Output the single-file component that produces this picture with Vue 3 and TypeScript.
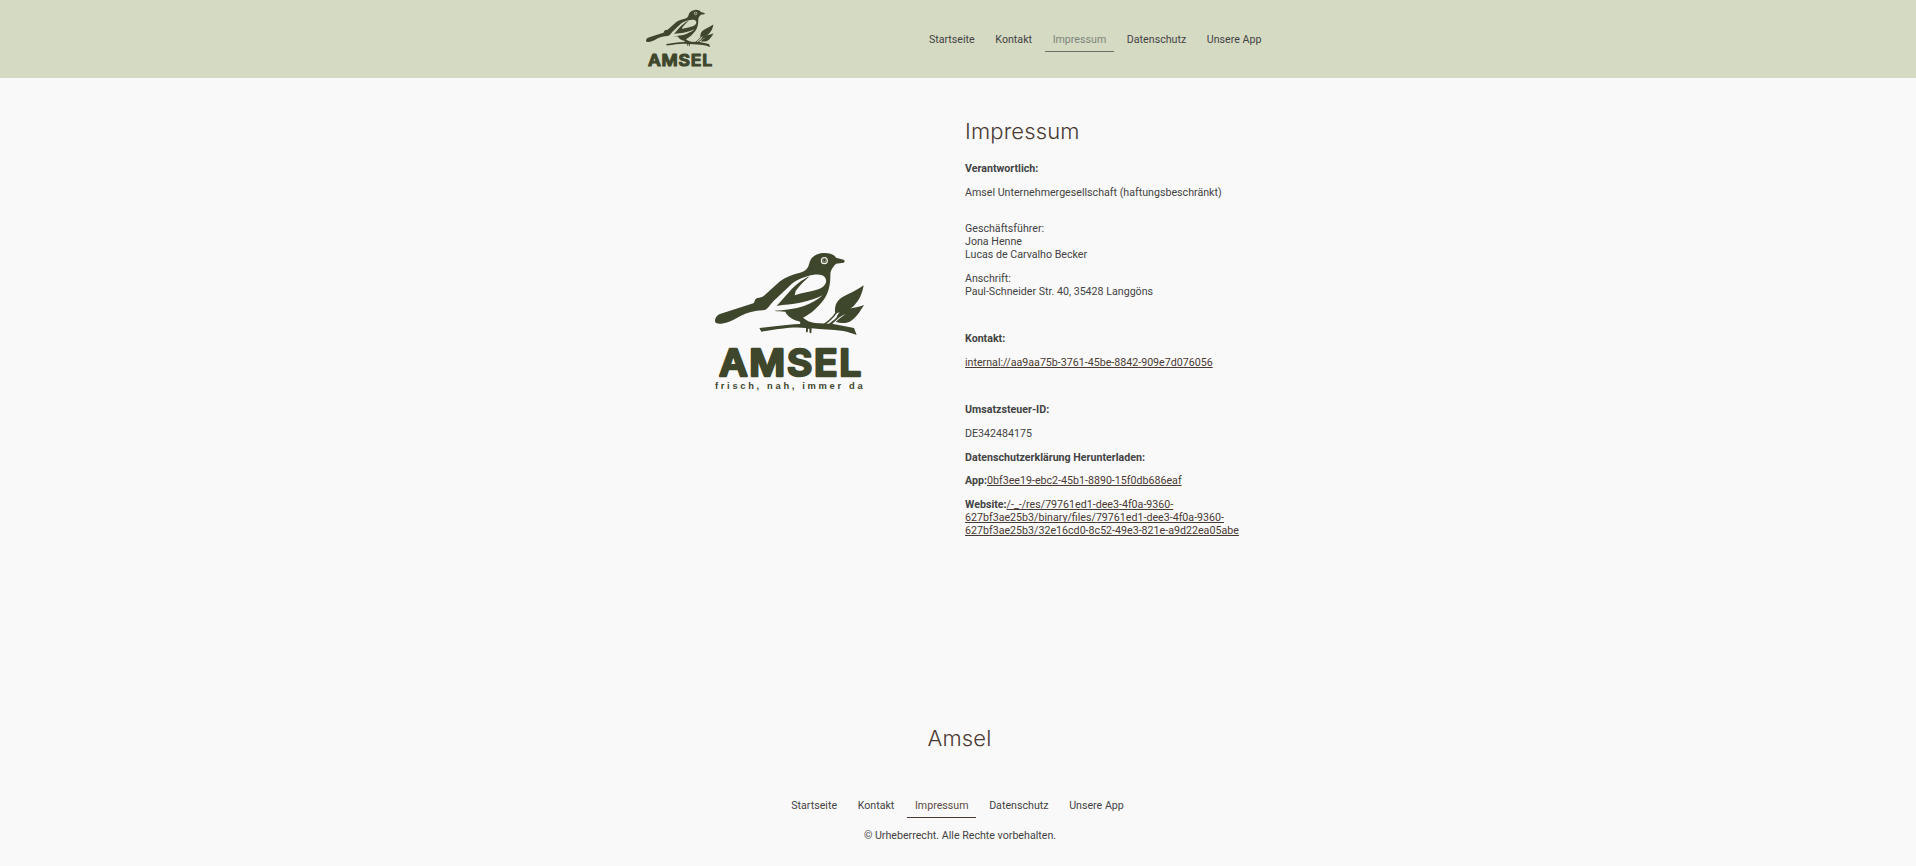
<script setup lang="ts">
import { defineComponent, h } from 'vue'

const nav: string[] = ['Startseite', 'Kontakt', 'Impressum', 'Datenschutz', 'Unsere App']
const active = 'Impressum'

const BODY =
  'M45 243C45 233 52 224 62 221L160 190C166 185 162 178 172 174C180 172 186 172 192 167L240 124C256 111 277 104 300 98C318 94 324 85 328 70C332 52 348 40 370 39C388 38 402 43 408 53L431 59C435 61 435 66 431 68L408 71C400 80 392 88 391 103C392 132 386 160 370 181C352 203 336 220 309 233C318 241 330 247 345 249L400 252L462 264L470 285C456 280 444 276 430 273C395 268 365 269 335 265L334 279L329 280L328 266L324 266L323 277L318 277L318 264C280 259 240 266 184 275L178 264C215 261 250 254 300 252C302 249 301 246 297 244C279 240 262 229 256 215C243 214 232 214 222 212C255 211 285 207 312 198C335 190 352 180 368 166C350 175 325 183 300 188C278 193 252 193 230 198L270 153C285 136 306 119 329 109C313 123 299 137 287 153L284 166C308 158 330 157 355 148C374 140 383 127 376 114C369 101 345 102 325 108C298 115 279 126 263 143L220 184C207 197 203 211 188 211C165 212 140 218 120 229C102 239 83 250 64 251C52 252 45 249 45 243Z'
const LEAF_UPPER =
  'M371 251C387 241 397 231 405 219C404 199 408 186 422 175C440 163 472 151 491 136C487 161 477 182 462 197C448 211 429 215 411 219C401 232 390 244 377 253Z'
const LEAF_LOWER =
  'M385 253C393 245 402 241 409 233C416 216 425 208 444 206C462 204 478 201 492 195C480 214 468 235 449 245C434 252 420 248 407 246C416 236 427 230 438 221C423 227 411 237 402 247L394 254Z'

const AmselLogo = defineComponent({
  props: { slogan: Boolean },
  setup(props) {
    return () =>
      h('svg', { viewBox: `0 0 540 ${props.slogan ? 480 : 450}`, role: 'img', 'aria-label': 'Amsel', fill: '#3e462c' }, [
        h('path', { d: BODY }),
        h('path', { d: LEAF_UPPER }),
        h('path', { d: LEAF_LOWER }),
        h('circle', { cx: 373, cy: 62, r: 9, fill: 'none', stroke: '#f1f2ea', 'stroke-width': 3.4 }),
        h('path', { d: 'M369 58V63C369 67 377 67 377 63V58', fill: 'none', stroke: '#e4e6dc', 'stroke-width': 1.6 }),
        h('text', {
          x: 58, y: 407, textLength: 431, lengthAdjust: 'spacingAndGlyphs',
          'font-family': 'Inter, sans-serif', 'font-weight': 600, 'font-size': 109, 'letter-spacing': 5,
          stroke: '#3e462c', 'stroke-width': 7.5, 'stroke-linejoin': 'round',
        }, 'AMSEL'),
        props.slogan
          ? h('text', {
              x: 45, y: 446, textLength: 443, lengthAdjust: 'spacing',
              'font-family': 'Liberation Sans, sans-serif', 'font-weight': 700, 'font-size': 28,
            }, 'frisch, nah, immer da')
          : null,
      ])
  },
})
</script>

<template>
  <div class="page">
    <header class="top">
      <div class="bar">
        <AmselLogo class="logo-small" />
        <nav class="nav">
          <a v-for="item in nav" :key="item" :class="{ active: item === active }">{{ item }}</a>
        </nav>
      </div>
    </header>

    <main class="content">
      <div class="figure"><AmselLogo slogan class="logo-large" /></div>
      <article class="text">
        <h1>Impressum</h1>
        <p><strong>Verantwortlich:</strong></p>
        <p>Amsel Unternehmergesellschaft (haftungsbeschränkt)</p>
        <p><br />Geschäftsführer:<br />Jona Henne<br />Lucas de Carvalho Becker</p>
        <p>Anschrift:<br />Paul-Schneider Str. 40, 35428 Langgöns</p>
        <p>&nbsp;</p>
        <p><strong>Kontakt:</strong></p>
        <p><a>internal://aa9aa75b-3761-45be-8842-909e7d076056</a></p>
        <p>&nbsp;</p>
        <p><strong>Umsatzsteuer-ID:</strong></p>
        <p>DE342484175</p>
        <p><strong>Datenschutzerklärung Herunterladen:</strong></p>
        <p><strong>App:</strong><a>0bf3ee19-ebc2-45b1-8890-15f0db686eaf</a></p>
        <p>
          <strong>Website:</strong><a>/-_-/res/79761ed1-dee3-4f0a-9360-<br />627bf3ae25b3/binary/files/79761ed1-dee3-4f0a-9360-<br />627bf3ae25b3/32e16cd0-8c52-49e3-821e-a9d22ea05abe</a>
        </p>
      </article>
    </main>

    <footer class="bottom">
      <h2>Amsel</h2>
      <nav class="nav">
        <a v-for="item in nav" :key="item" :class="{ active: item === active }">{{ item }}</a>
      </nav>
      <p class="copyright">© Urheberrecht. Alle Rechte vorbehalten.</p>
    </footer>
  </div>
</template>

<style>
body {
  background: #f9f9f9;
}
</style>

<style scoped>
.page {
  box-sizing: border-box;
  height: 866px;
  overflow: hidden;
  display: flex;
  flex-direction: column;
  font: 10.667px/13px Roboto, sans-serif;
  color: #434343;
  background: #f9f9f9;
}
.top {
  height: 78px;
  background: #d5dac3;
  flex: none;
}
.bar {
  width: 638px;
  margin: 0 auto;
  display: flex;
  justify-content: space-between;
  align-items: flex-start;
}
.logo-small {
  width: 82px;
  height: 68px;
  margin-top: 4px;
}
.nav {
  display: flex;
  gap: 5.6px;
}
.nav a {
  height: 18px;
  padding: 0 7.5px;
  border-bottom: 1px solid transparent;
}
.top .nav {
  margin: 33px 8px 0 0;
}
.top .active {
  color: #80847a;
  border-color: #6b6e64;
}
.content {
  width: 638px;
  height: 640px;
  margin: 0 auto;
  display: flex;
  flex: none;
}
.figure {
  width: 326px;
  padding: 162px 0 0 61px;
  box-sizing: border-box;
}
.logo-large {
  display: block;
  width: 180px;
  height: 160px;
}
.text {
  flex: 1;
  padding-top: 39px;
  white-space: nowrap;
}
h1,
h2 {
  margin: 0;
  font: 300 22px/28px Inter, sans-serif;
  letter-spacing: 0.15px;
  color: #4a3a33;
}
h1 {
  margin-bottom: 17px;
}
p {
  margin: 0 0 10.667px;
}
.text a {
  color: #4a3a33;
  text-decoration: underline;
  text-underline-offset: 1px;
  text-decoration-skip-ink: none;
}
.bottom {
  display: flex;
  flex-direction: column;
  align-items: center;
}
.bottom h2 {
  margin: 6px 0 47px 3px;
}
.bottom .nav {
  margin-right: 1px;
}
.bottom .active {
  color: #5c4a43;
  border-color: #4a3a33;
}
.copyright {
  margin: 11px 0 0 4px;
}
</style>
